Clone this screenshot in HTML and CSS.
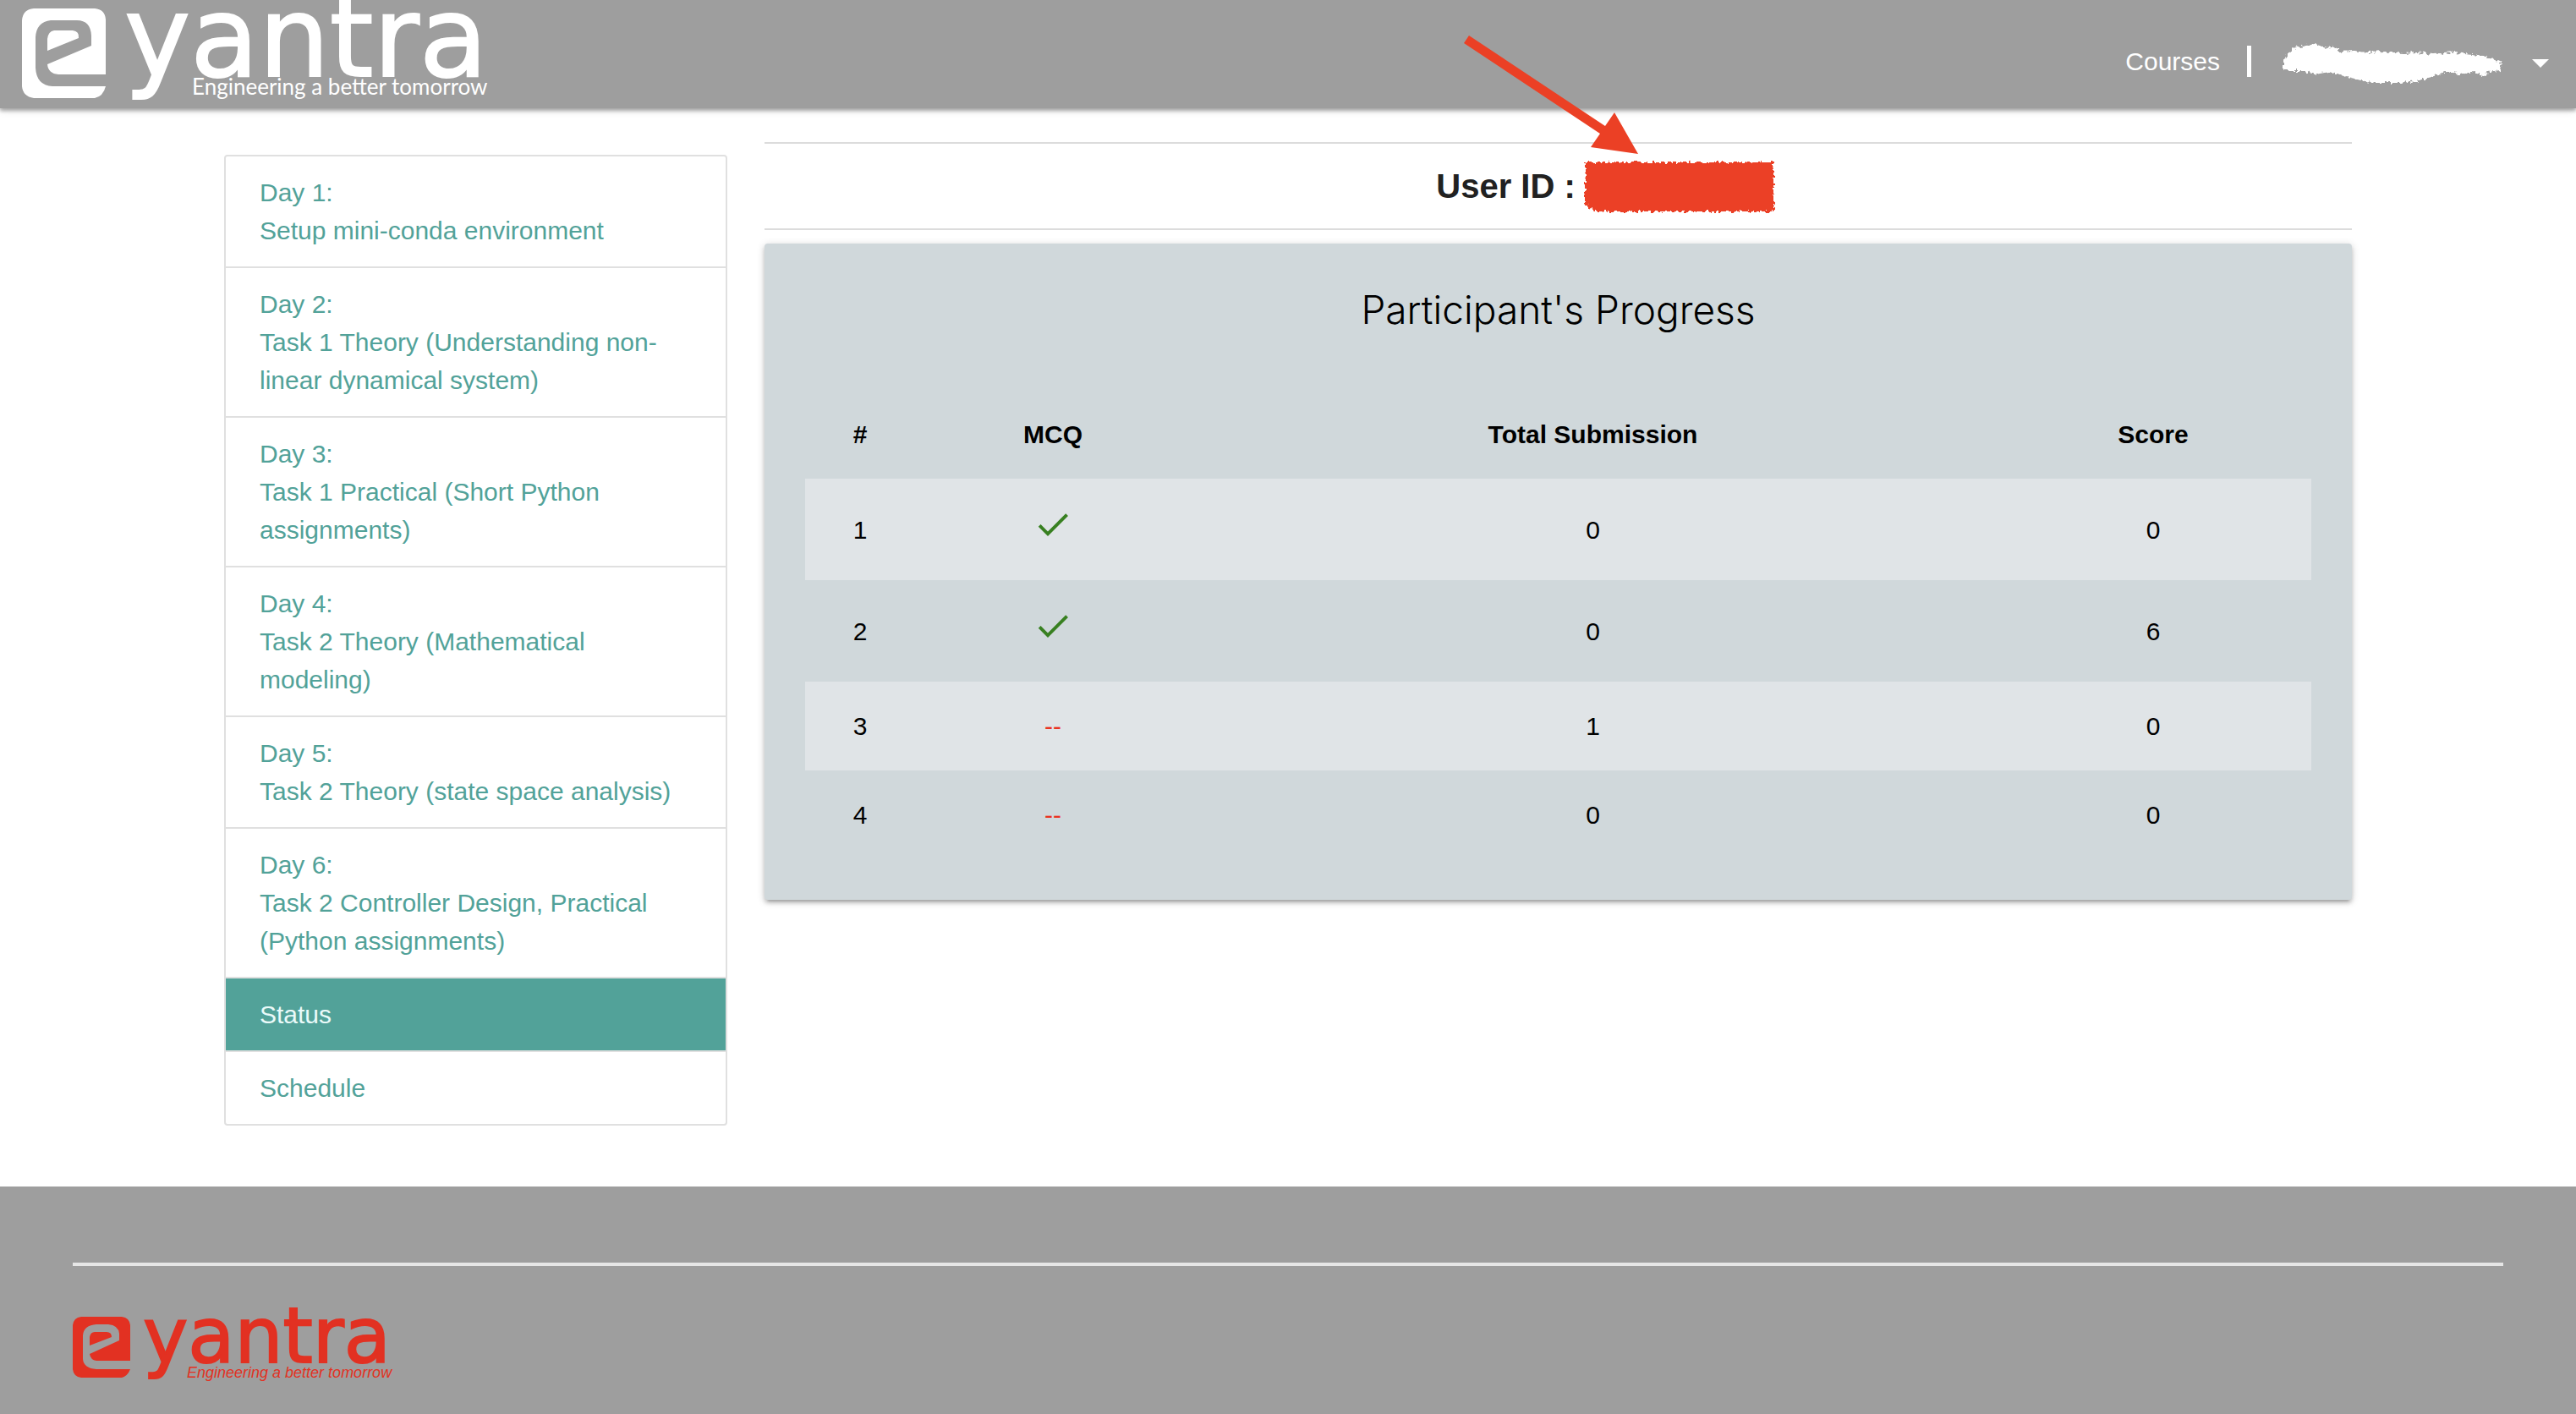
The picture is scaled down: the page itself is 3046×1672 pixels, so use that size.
FILE: index.html
```html
<!DOCTYPE html>
<html lang="en">
<head>
<meta charset="utf-8">
<title>e-Yantra | Participant's Progress</title>
<link rel="stylesheet" href="styles.css">
</head>
<body>
<header class="topbar">
  <a class="brand" href="#" aria-label="e-Yantra home">
    <svg class="brand-logo" viewBox="0 0 562 128">
      <path fill="currentColor" fill-rule="evenodd" d="M14 10H86Q98 11 99 23V88H43Q31 87 30 76L82 54V42Q81 24 65 24H34Q17 26 16 44V80Q17 101 36 102H99Q96 114 86 116H14Q1 114 0 102V24Q1 11 14 10ZM30 60V46Q31 37 38 36H60Q68 37 67 45Z"/>
      <text class="wordmark" x="121" y="90">yantra</text>
      <text class="tagline" x="201" y="112">Engineering a better tomorrow</text>
    </svg>
  </a>
  <nav class="topnav">
    <a class="topnav-link" href="#">Courses</a>
    <span class="divider"></span>
    <button class="account" type="button" aria-label="Account menu">
      <svg class="scribble" viewBox="0 0 262 48">
        <defs>
          <filter id="rough" x="-5%" y="-10%" width="110%" height="120%">
            <feTurbulence type="fractalNoise" baseFrequency="0.25" numOctaves="2" seed="4"/>
            <feDisplacementMap in="SourceGraphic" scale="8" xChannelSelector="R" yChannelSelector="G"/>
          </filter>
        </defs>
        <path fill="currentColor" filter="url(#rough)" d="M2 20L8 12 16 5 30 3 38 1 52 5 60 4 70 10 84 9 100 11 120 10 144 12 160 11 180 13 204 11 226 13 242 16 252 20 260 24 258 32 246 34 236 39 228 34 210 37 196 33 180 39 160 45 140 47 110 47 90 43 70 38 56 34 40 37 26 33 10 33 2 30Z"/>
      </svg>
      <svg class="caret" viewBox="0 0 20 10"><path fill="currentColor" d="M0 0H20L10 10Z"/></svg>
    </button>
  </nav>
</header>

<main class="container">
  <nav class="collection">
    <a class="item" href="#">Day 1:<br>Setup mini-conda environment</a>
    <a class="item" href="#">Day 2:<br>Task 1 Theory (Understanding non-linear dynamical system)</a>
    <a class="item" href="#">Day 3:<br>Task 1 Practical (Short Python assignments)</a>
    <a class="item" href="#">Day 4:<br>Task 2 Theory (Mathematical modeling)</a>
    <a class="item" href="#">Day 5:<br>Task 2 Theory (state space analysis)</a>
    <a class="item" href="#">Day 6:<br>Task 2 Controller Design, Practical (Python assignments)</a>
    <a class="item active" href="#" aria-current="page">Status</a>
    <a class="item" href="#">Schedule</a>
  </nav>
  <section class="content">
    <div class="user">
      <h1 class="user-id">User ID :</h1>
      <div class="redacted-wrap">
        <svg class="redacted" viewBox="0 0 226 60"><path class="ink" filter="url(#rough)" d="M1 2H224V60H12L1 51Z"/></svg>
        <svg class="arrow" viewBox="0 0 206 140">
          <path class="ink" d="M6 0L167 107 178 91 206 140 150 132 161 116 0 9Z"/>
        </svg>
      </div>
    </div>
    <article class="card">
      <h2 class="card-title">Participant's Progress</h2>
      <table class="progress">
        <colgroup><col class="c-num"><col class="c-mcq"><col><col class="c-score"></colgroup>
        <thead>
          <tr><th>#</th><th>MCQ</th><th>Total Submission</th><th>Score</th></tr>
        </thead>
        <tbody>
          <tr><td>1</td><td><svg class="check" viewBox="0 0 24 24" role="img" aria-label="Done"><path d="M9 16.2L4.8 12l-1.4 1.4L9 19 21 7l-1.4-1.4L9 16.2z"/></svg></td><td>0</td><td>0</td></tr>
          <tr><td>2</td><td><svg class="check" viewBox="0 0 24 24" role="img" aria-label="Done"><path d="M9 16.2L4.8 12l-1.4 1.4L9 19 21 7l-1.4-1.4L9 16.2z"/></svg></td><td>0</td><td>6</td></tr>
          <tr><td>3</td><td class="missing">--</td><td>1</td><td>0</td></tr>
          <tr><td>4</td><td class="missing">--</td><td>0</td><td>0</td></tr>
        </tbody>
      </table>
    </article>
  </section>
</main>

<footer class="footer">
  <hr class="rule">
  <svg class="footer-logo" viewBox="0 0 382 74" role="img" aria-label="e-Yantra">
    <path fill="currentColor" fill-rule="evenodd" d="M10 0H58Q67 1 68 10V52H28Q21 51 20 44L55 28V20Q54 10 42 9H28Q13 10 12 22V50Q13 61 28 62H68Q65 70 58 72H10Q1 71 0 62V10Q1 1 10 0ZM20 34V24Q21 18 26 18H40Q46 18 46 24Z"/>
    <text class="wordmark" x="83" y="54">yantra</text>
    <text class="tagline" x="135" y="72">Engineering a better tomorrow</text>
  </svg>
</footer>
</body>
</html>
```
FILE: styles.css
```css
* { box-sizing: border-box; }

body {
  margin: 0;
  min-height: 100vh;
  display: flex;
  flex-direction: column;
  background: #fff;
  color: #212121;
  font-family: "Liberation Sans", Arial, sans-serif;
  font-size: 30px;
  line-height: 45px;
}

a { color: inherit; text-decoration: none; }

.topbar {
  display: flex;
  justify-content: space-between;
  height: 128px;
  padding: 0 24px 0 26px;
  background: #9e9e9e;
  color: #fff;
  box-shadow: 0 4px 4px rgba(0, 0, 0, .14), 0 2px 10px rgba(0, 0, 0, .12), 0 2px 4px rgba(0, 0, 0, .2);
}

.brand-logo { display: block; width: 562px; height: 128px; }
.brand-logo text, .footer-logo text { fill: currentColor; }
.wordmark { stroke: currentColor; stroke-width: 2px; }
.brand-logo .wordmark { font: 400 132px "DejaVu Sans", sans-serif; }
.brand-logo .tagline { font: 400 26px Lato, sans-serif; }

.topnav { display: flex; align-items: center; height: 144px; }
.divider { width: 5px; height: 37px; margin: 0 36px 0 32px; background: #fff; }
.account {
  display: flex;
  align-items: center;
  gap: 34px;
  padding: 6px 8px 0 0;
  border: 0;
  background: none;
  color: inherit;
}
.scribble { width: 262px; height: 48px; overflow: visible; }
.caret { width: 20px; height: 10px; }

.container {
  display: grid;
  grid-template-columns: 595px 1fr;
  gap: 44px;
  align-items: start;
  padding: 0 265px 72px;
}

.collection {
  margin-top: 55px;
  border: 2px solid #e0e0e0;
  border-radius: 4px;
  overflow: hidden;
  color: #52a299;
}
.item { display: block; padding: 20px 40px; border-bottom: 2px solid #e0e0e0; }
.item:last-child { border-bottom: 0; }
.item.active { background: #52a299; color: #eafaf9; }

.content { margin-top: 40px; }
.user {
  display: flex;
  justify-content: center;
  align-items: center;
  gap: 10px;
  height: 104px;
  margin-bottom: 16px;
  padding-left: 112px;
  border: solid #dcdcdc;
  border-width: 2px 0;
}
.user-id { margin: 0; font-size: 40px; }
.redacted-wrap { position: relative; width: 226px; height: 60px; }
.redacted { display: block; width: 226px; height: 60px; overflow: visible; }
.arrow { position: absolute; right: 162px; bottom: 68px; width: 206px; height: 140px; }
.ink { fill: #eb4025; }

.card {
  padding: 48px;
  border-radius: 4px;
  background: #d0d8db;
  color: #000;
  box-shadow: 0 4px 4px rgba(0, 0, 0, .14), 0 6px 2px -4px rgba(0, 0, 0, .12), 0 2px 10px rgba(0, 0, 0, .2);
}
.card-title {
  margin: 0 0 65px;
  font: 300 46px/60px Inter, sans-serif;
  text-align: center;
}
.progress { width: 100%; border-collapse: collapse; table-layout: fixed; text-align: center; }
.progress th, .progress td { padding: 30px 10px; }
.progress tbody tr:nth-child(odd) { background: #e0e4e7; }
.c-num { width: 130px; }
.c-mcq { width: 326px; }
.c-score { width: 374px; }
.check { width: 48px; height: 48px; fill: #388021; }
.missing { color: #ea3323; }

.footer { flex: 1; padding: 90px 86px 43px; background: #9e9e9e; color: #e23122; }
.rule { height: 4px; margin: 0 0 60px; border: 0; background: #e6e6e6; }
.footer-logo { display: block; width: 382px; height: 74px; overflow: visible; }
.footer-logo .wordmark { font: 400 90px "DejaVu Sans", sans-serif; }
.footer-logo .tagline { font: italic 18px "Liberation Sans", sans-serif; }
```
